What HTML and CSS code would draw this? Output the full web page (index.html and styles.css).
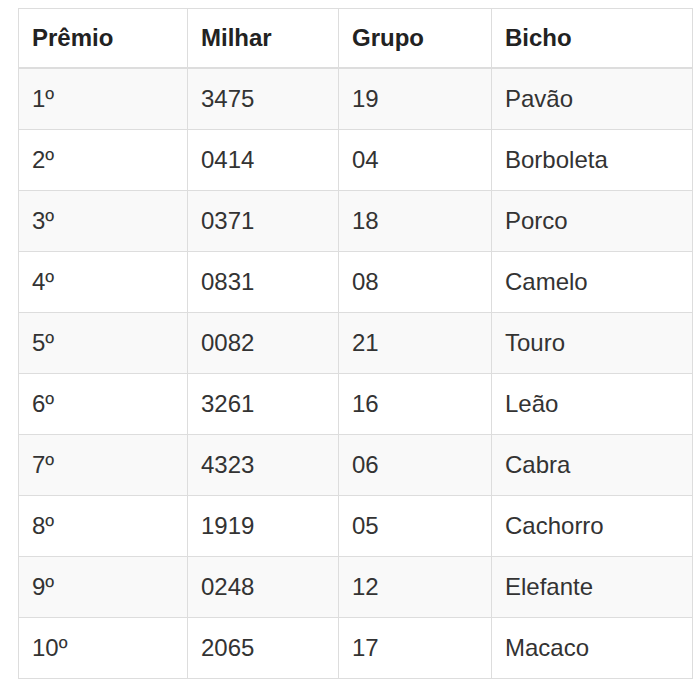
FILE: index.html
```html
<!DOCTYPE html>
<html lang="pt">
<head>
<meta charset="utf-8">
<link rel="stylesheet" href="styles.css">
</head>
<body>
<table class="results">
  <colgroup>
    <col class="c1"><col class="c2"><col class="c3"><col class="c4">
  </colgroup>
  <thead>
    <tr><th>Prêmio</th><th>Milhar</th><th>Grupo</th><th>Bicho</th></tr>
  </thead>
  <tbody>
    <tr><td>1º</td><td>3475</td><td>19</td><td>Pavão</td></tr>
    <tr><td>2º</td><td>0414</td><td>04</td><td>Borboleta</td></tr>
    <tr><td>3º</td><td>0371</td><td>18</td><td>Porco</td></tr>
    <tr><td>4º</td><td>0831</td><td>08</td><td>Camelo</td></tr>
    <tr><td>5º</td><td>0082</td><td>21</td><td>Touro</td></tr>
    <tr><td>6º</td><td>3261</td><td>16</td><td>Leão</td></tr>
    <tr><td>7º</td><td>4323</td><td>06</td><td>Cabra</td></tr>
    <tr><td>8º</td><td>1919</td><td>05</td><td>Cachorro</td></tr>
    <tr><td>9º</td><td>0248</td><td>12</td><td>Elefante</td></tr>
    <tr><td>10º</td><td>2065</td><td>17</td><td>Macaco</td></tr>
  </tbody>
</table>
</body>
</html>
```
FILE: styles.css
```css
html, body {
  margin: 0;
  padding: 0;
  background: #fff;
}
body {
  font-family: "Liberation Sans", Arial, sans-serif;
  color: #333;
}
.results {
  border-collapse: collapse;
  margin: 8px 0 0 18px;
  width: 674px;
  table-layout: fixed;
  border: 1px solid #ddd;
}
.c1 { width: 169px; }
.c2 { width: 151px; }
.c3 { width: 153px; }
.c4 { width: 201px; }
.results th,
.results td {
  border: 1px solid #ddd;
  text-align: left;
  font-size: 24px;
  line-height: 28px;
  padding: 16px 13px;
  vertical-align: middle;
}
.results th {
  font-weight: bold;
  color: #222;
  padding-top: 15px;
  padding-bottom: 15px;
  border-bottom-width: 2px;
}
.results tbody tr:nth-child(odd) td {
  background: #f9f9f9;
}
```
